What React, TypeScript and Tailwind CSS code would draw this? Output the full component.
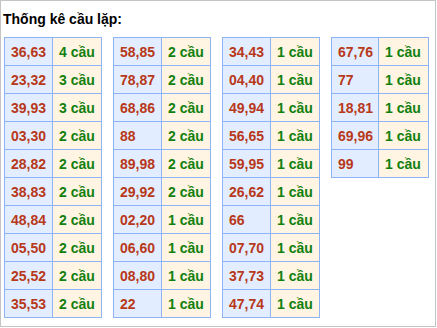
const tables: [string, string][][] = [
  [
    ["36,63", "4 cầu"],
    ["23,32", "3 cầu"],
    ["39,93", "3 cầu"],
    ["03,30", "2 cầu"],
    ["28,82", "2 cầu"],
    ["38,83", "2 cầu"],
    ["48,84", "2 cầu"],
    ["05,50", "2 cầu"],
    ["25,52", "2 cầu"],
    ["35,53", "2 cầu"],
  ],
  [
    ["58,85", "2 cầu"],
    ["78,87", "2 cầu"],
    ["68,86", "2 cầu"],
    ["88", "2 cầu"],
    ["89,98", "2 cầu"],
    ["29,92", "2 cầu"],
    ["02,20", "1 cầu"],
    ["06,60", "1 cầu"],
    ["08,80", "1 cầu"],
    ["22", "1 cầu"],
  ],
  [
    ["34,43", "1 cầu"],
    ["04,40", "1 cầu"],
    ["49,94", "1 cầu"],
    ["56,65", "1 cầu"],
    ["59,95", "1 cầu"],
    ["26,62", "1 cầu"],
    ["66", "1 cầu"],
    ["07,70", "1 cầu"],
    ["37,73", "1 cầu"],
    ["47,74", "1 cầu"],
  ],
  [
    ["67,76", "1 cầu"],
    ["77", "1 cầu"],
    ["18,81", "1 cầu"],
    ["69,96", "1 cầu"],
    ["99", "1 cầu"],
  ],
]

function PairTable({ rows, narrow }: { rows: [string, string][]; narrow?: boolean }) {
  return (
    <table className="border-collapse table-fixed w-[98px] self-start">
      <colgroup>
        <col className={narrow ? "w-[47px]" : "w-[48px]"} />
        <col />
      </colgroup>
      <tbody>
        {rows.map(([pair, count]) => (
          <tr key={pair} className="h-[28px]">
            <td className="border border-[#8eb4f5] bg-[#e2eeff] pl-[6px] pr-0 text-[#b8381a] font-bold text-[14px] leading-none whitespace-nowrap">
              {pair}
            </td>
            <td className="border border-[#8eb4f5] bg-[#fff5e2] pl-[6px] pr-0 text-[#12800f] font-bold text-[14px] leading-none whitespace-nowrap">
              {count}
            </td>
          </tr>
        ))}
      </tbody>
    </table>
  )
}

export default function App() {
  return (
    <div className="w-[437px] h-[328px] bg-white" style={{ fontFamily: '"Liberation Sans", Arial, sans-serif' }}>
      <div className="w-[436px] h-[327px] border border-[#c4c4c4] pl-[3px]">
        <h3 className="text-[14px] font-bold text-black leading-none pt-[11px] pb-[11px] -ml-[1px]">
          Thống kê cầu lặp:
        </h3>
        <div className="flex gap-[11px]">
          {tables.map((rows, i) => (
            <PairTable key={i} rows={rows} narrow={i === 3} />
          ))}
        </div>
      </div>
    </div>
  )
}
